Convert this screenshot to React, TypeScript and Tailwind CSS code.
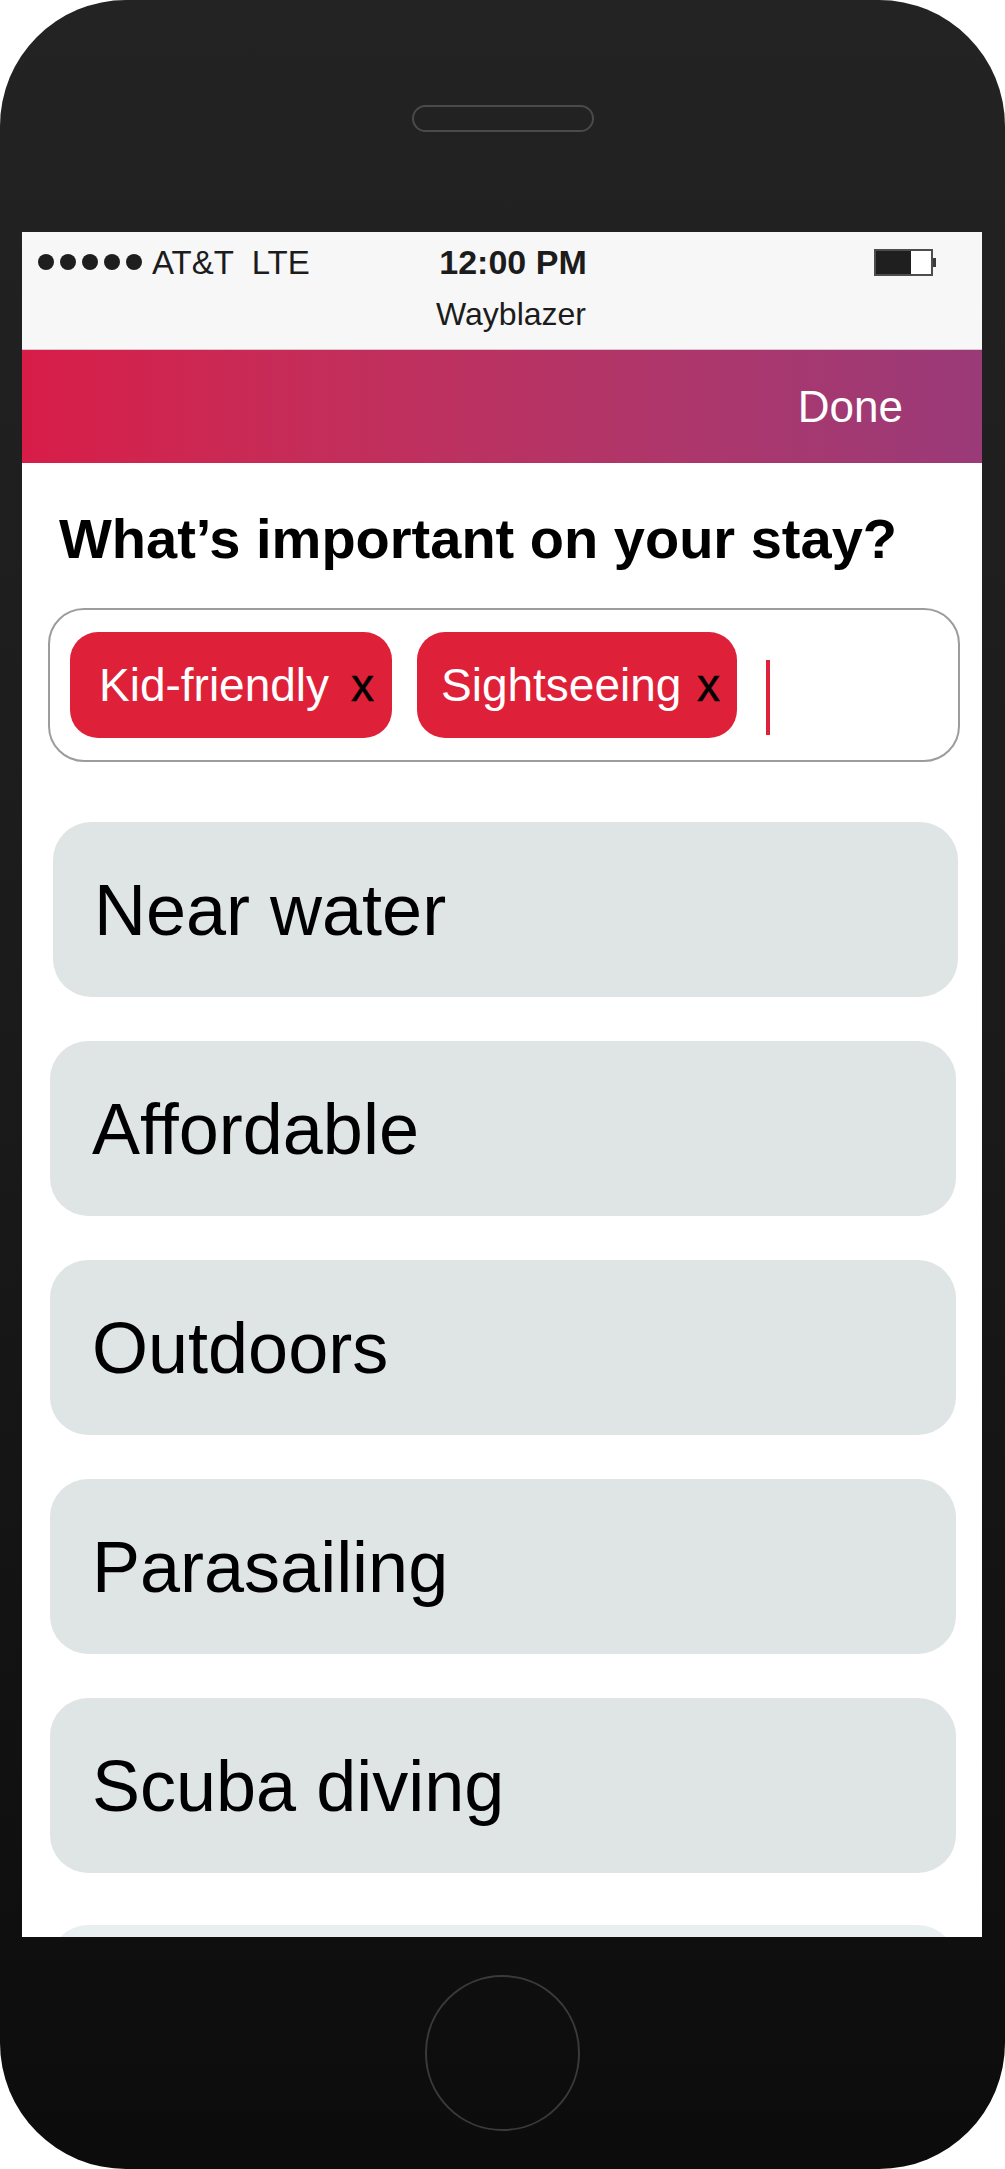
import React from 'react';

// --- Bits ---

const SignalDots = () => (
  <div className="flex items-center gap-[6px]">
    {[0, 1, 2, 3, 4].map((i) => (
      <span key={i} className="block w-[16px] h-[16px] rounded-full bg-[#1e1e1e]" />
    ))}
  </div>
);

const Battery = () => (
  <div className="flex items-center">
    <div className="w-[59px] h-[27px] border-2 border-[#4d4d4d] bg-white flex">
      <div className="w-[35px] h-full bg-[#1f1f1f]" />
    </div>
    <div className="w-[3px] h-[9px] bg-[#3a3a3a]" />
  </div>
);

const Tag: React.FC<{ label: string; className?: string }> = ({ label, className }) => (
  <div className={`h-[106px] rounded-[28px] bg-[#df2039] flex items-center justify-between text-[46px] leading-none ${className ?? ''}`}>
    <span className="text-white">{label}</span>
    <span className="text-black [-webkit-text-stroke:0.5px_black]">x</span>
  </div>
);

const Option: React.FC<{ label: string; className?: string }> = ({ label, className }) => (
  <div className={`h-[175px] rounded-[38px] bg-[#dfe4e4] flex items-center text-[72px] leading-none text-black ${className ?? ''}`}>
    {label}
  </div>
);

// --- Page ---

export default function App() {
  const options = [
    { label: 'Near water', className: 'ml-[31px] w-[905px] pl-[41px]' },
    { label: 'Affordable', className: 'ml-[28px] w-[906px] pl-[42px]' },
    { label: 'Outdoors', className: 'ml-[28px] w-[906px] pl-[42px]' },
    { label: 'Parasailing', className: 'ml-[28px] w-[906px] pl-[42px]' },
    { label: 'Scuba diving', className: 'ml-[28px] w-[906px] pl-[42px]' },
  ];

  return (
    <div className="w-[1005px] h-[2169px] bg-white font-['Liberation_Sans',Arial,sans-serif]">
      <div className="w-full h-full rounded-[126px] bg-linear-to-b from-[#232323] via-[#1a1a1a] to-[#0c0c0c] flex flex-col overflow-hidden">
        {/* Top bezel */}
        <div className="h-[232px] flex justify-center pt-[105px] shrink-0">
          <div className="w-[182px] h-[27px] rounded-full border-2 border-[#4a4a4a]" />
        </div>

        {/* Screen */}
        <div className="ml-[22px] w-[960px] h-[1705px] bg-white overflow-hidden flex flex-col shrink-0">
          {/* Status bar */}
          <div className="h-[117px] bg-[#f7f7f7] flex flex-col shrink-0 text-[#1c1c1c]">
            <div className="h-[60px] grid grid-cols-[1fr_auto_1fr] items-center">
              <div className="flex items-center pl-[16px] gap-[10px] text-[33px] leading-none">
                <SignalDots />
                <span className="whitespace-pre">AT&amp;T  LTE</span>
              </div>
              <div className="ml-[22px] text-[34px] leading-none font-bold">12:00 PM</div>
              <div className="flex justify-end pr-[46px]">
                <Battery />
              </div>
            </div>
            <div className="h-[43px] flex items-center justify-center pl-[18px] text-[32px] leading-none">
              Wayblazer
            </div>
          </div>

          {/* Nav band */}
          <div className="h-[114px] shrink-0 border-t border-[#dcc4cf] bg-linear-to-r from-[#d81c48] to-[#9a3a78] flex items-center justify-end pr-[79px]">
            <span className="text-white text-[44px] leading-none">Done</span>
          </div>

          {/* Content */}
          <div className="flex flex-col">
            <h1 className="mt-[48px] pl-[37px] text-[56px] leading-none font-bold text-black">
              What’s important on your stay?
            </h1>

            <div className="mt-[41px] ml-[26px] w-[912px] h-[154px] rounded-[36px] border-2 border-[#9c9c9c] flex items-center pl-[20px] gap-[25px]">
              <Tag label="Kid-friendly" className="w-[322px] pl-[29px] pr-[18px]" />
              <Tag label="Sightseeing" className="w-[320px] pl-[24px] pr-[17px]" />
              <div className="ml-[4px] mt-[25px] w-[4px] h-[75px] bg-[#df2039]" />
            </div>

            <div className="mt-[60px] flex flex-col gap-[44px]">
              {options.map((o) => (
                <Option key={o.label} label={o.label} className={o.className} />
              ))}
              <div className="mt-[8px] ml-[28px] w-[906px] h-[175px] rounded-[38px] bg-[#e9eff1]" />
            </div>
          </div>
        </div>

        {/* Bottom bezel */}
        <div className="flex-1 flex justify-center pt-[38px]">
          <div className="w-[155px] h-[156px] rounded-full border-2 border-[#3a3a3a]" />
        </div>
      </div>
    </div>
  );
}
